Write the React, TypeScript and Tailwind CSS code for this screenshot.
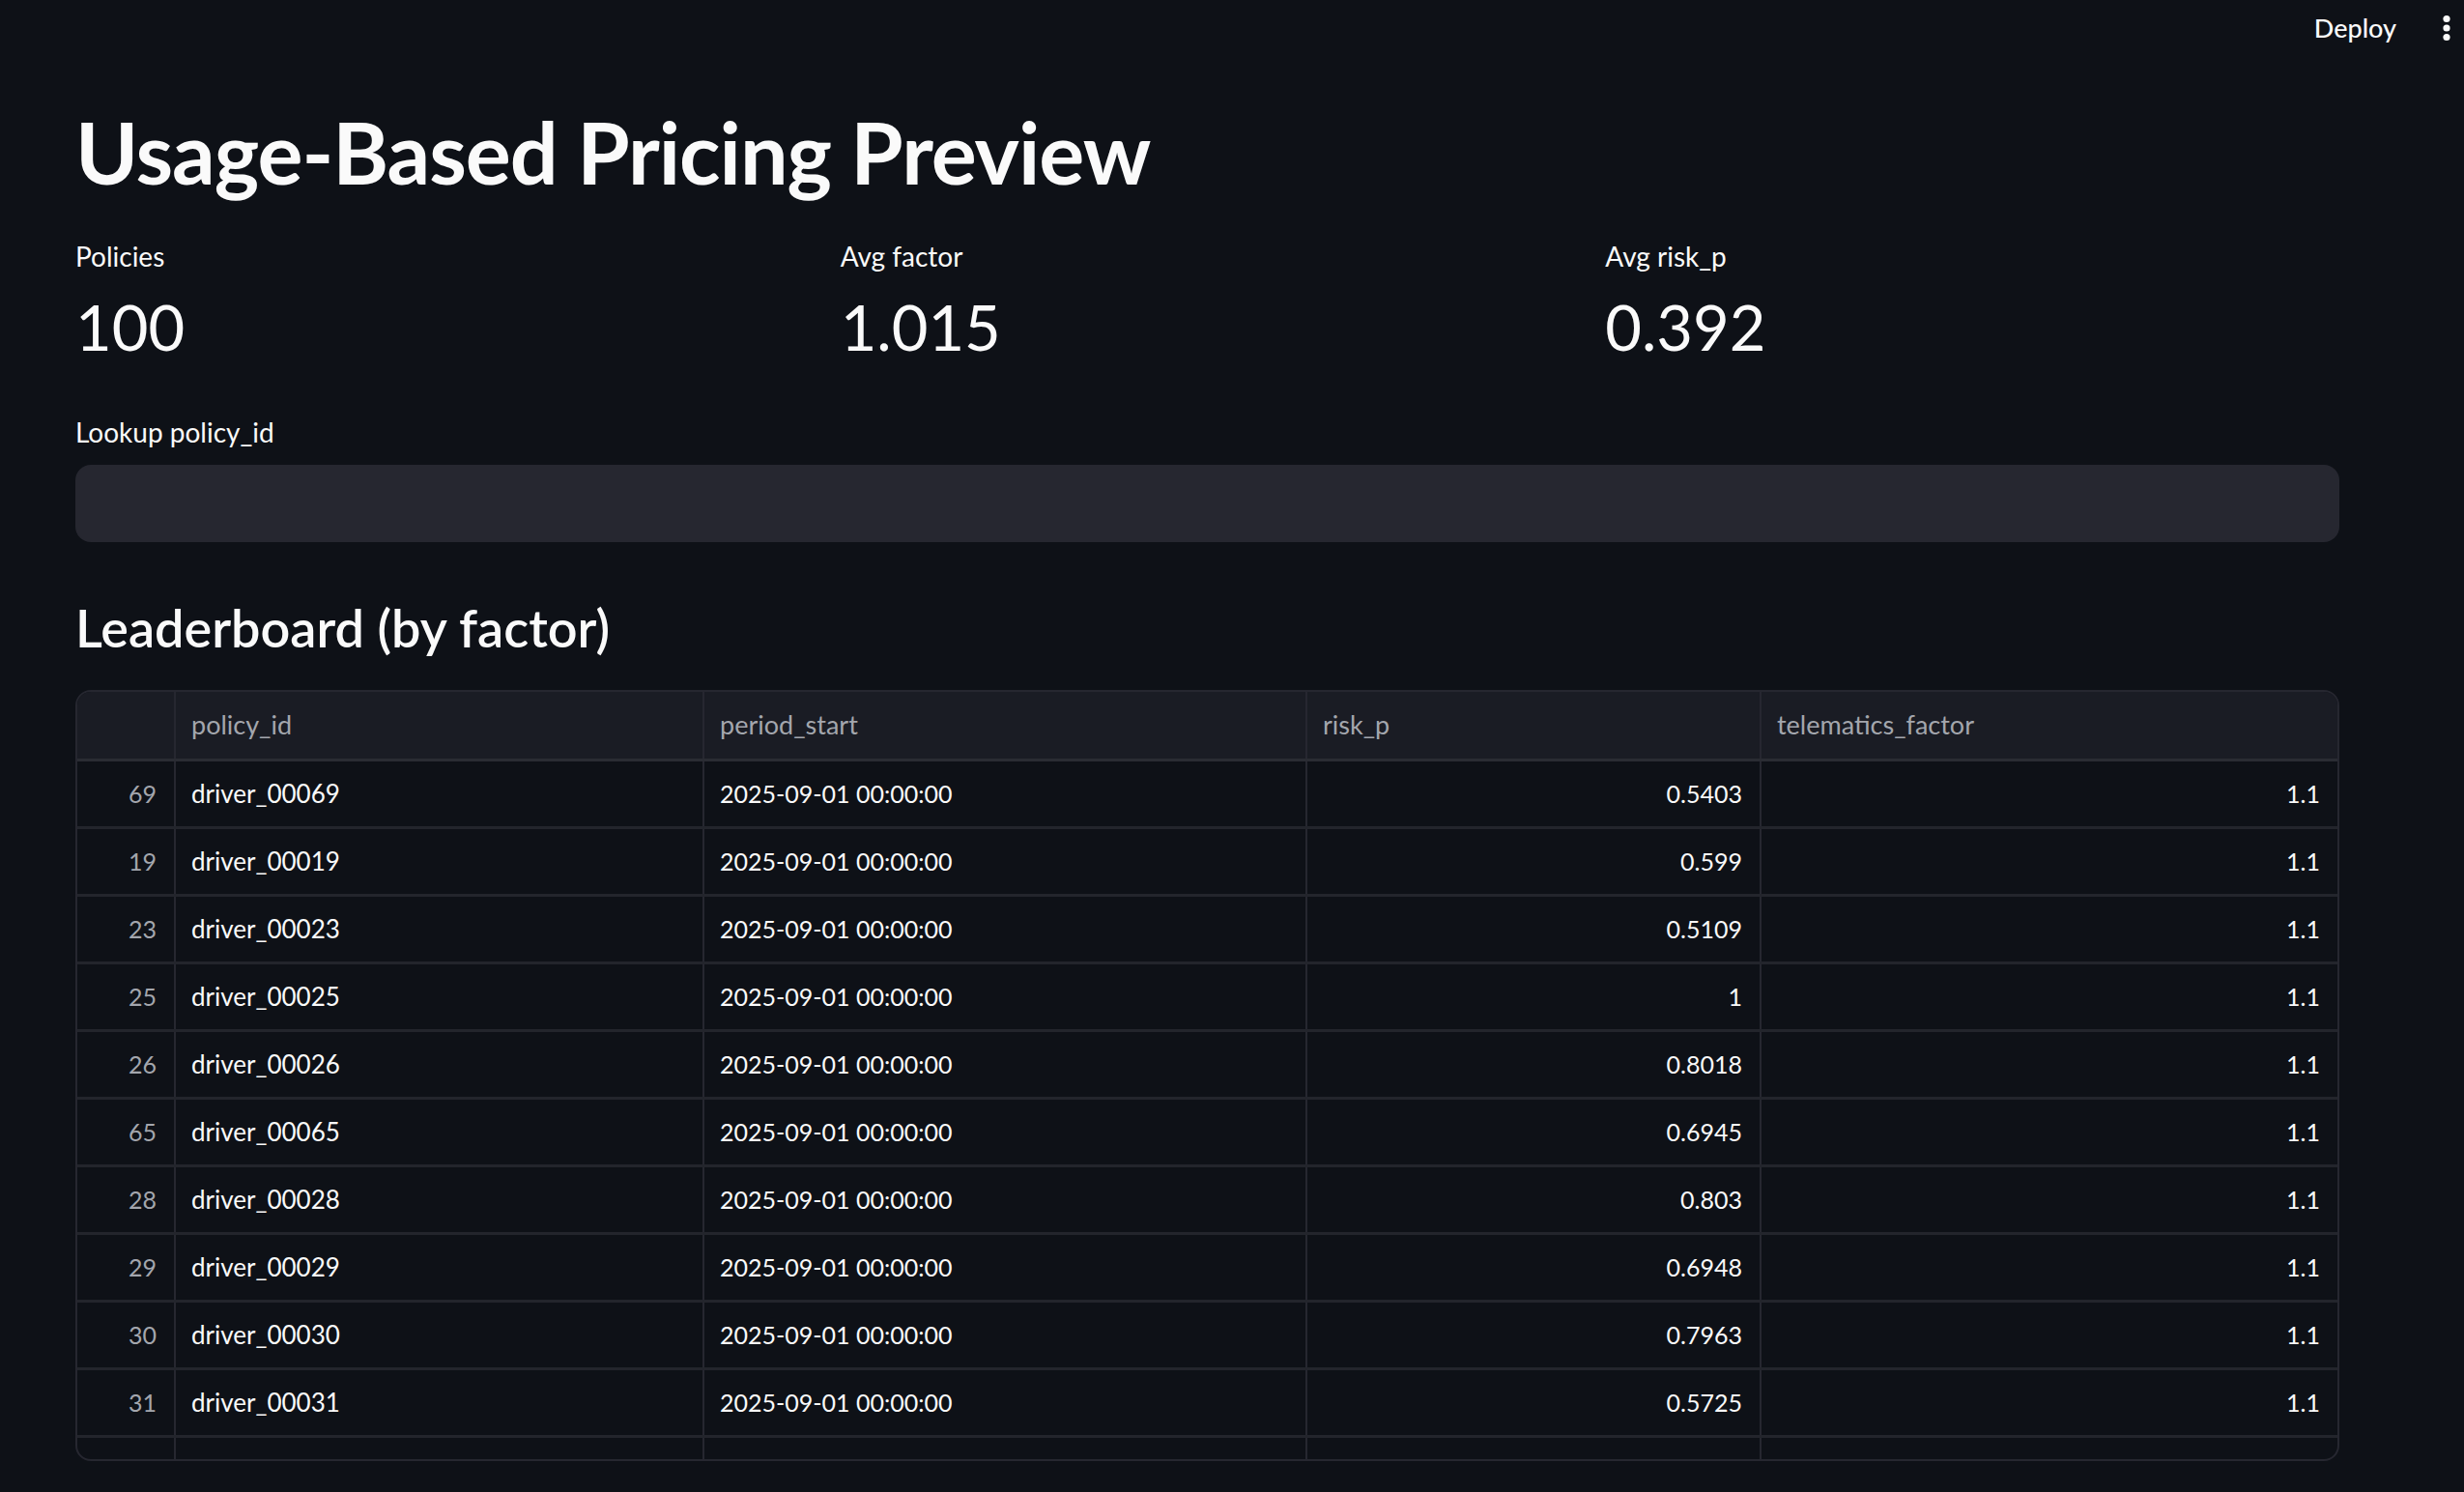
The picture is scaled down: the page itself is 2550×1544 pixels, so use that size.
// App.tsx — Streamlit-like dark "Usage-Based Pricing Preview" page
import React from "react";

// ── Data ────────────────────────────────────────────────────────────────────
interface Row {
  idx: number;
  policy: string;
  start: string;
  risk: string;
  factor: string;
}

const ROWS: Row[] = [
  { idx: 69, policy: "driver_00069", start: "2025-09-01 00:00:00", risk: "0.5403", factor: "1.1" },
  { idx: 19, policy: "driver_00019", start: "2025-09-01 00:00:00", risk: "0.599", factor: "1.1" },
  { idx: 23, policy: "driver_00023", start: "2025-09-01 00:00:00", risk: "0.5109", factor: "1.1" },
  { idx: 25, policy: "driver_00025", start: "2025-09-01 00:00:00", risk: "1", factor: "1.1" },
  { idx: 26, policy: "driver_00026", start: "2025-09-01 00:00:00", risk: "0.8018", factor: "1.1" },
  { idx: 65, policy: "driver_00065", start: "2025-09-01 00:00:00", risk: "0.6945", factor: "1.1" },
  { idx: 28, policy: "driver_00028", start: "2025-09-01 00:00:00", risk: "0.803", factor: "1.1" },
  { idx: 29, policy: "driver_00029", start: "2025-09-01 00:00:00", risk: "0.6948", factor: "1.1" },
  { idx: 30, policy: "driver_00030", start: "2025-09-01 00:00:00", risk: "0.7963", factor: "1.1" },
  { idx: 31, policy: "driver_00031", start: "2025-09-01 00:00:00", risk: "0.5725", factor: "1.1" },
  { idx: 32, policy: "driver_00032", start: "2025-09-01 00:00:00", risk: "0.6612", factor: "1.1" },
];

const COLS = "grid grid-cols-[102px_547px_624px_470px_1fr]";

// ── Metric block ────────────────────────────────────────────────────────────
const Metric: React.FC<{ label: string; value: string }> = ({ label, value }) => (
  <div className="flex flex-col">
    <p className="text-[28px] leading-[36px] text-[#fafafa]">{label}</p>
    <p className="mt-[12px] text-[65px] leading-[86px] text-[#fafafa]">{value}</p>
  </div>
);

// ── Page ────────────────────────────────────────────────────────────────────
const App: React.FC = () => {
  return (
    <div
      className="min-h-screen h-[1544px] overflow-hidden bg-[#0e1117] text-[#fafafa]"
      style={{ fontFamily: "Lato, 'Open Sans', sans-serif" }}
    >
      {/* ── Top bar ── */}
      <header className="flex h-[58px] items-center justify-end pr-[14px]">
        <span className="text-[27px] font-medium text-[#fafafa]">Deploy</span>
        <svg className="ml-[48px] h-[28px] w-[8px]" viewBox="0 0 8 28" fill="#fafafa">
          <circle cx="4" cy="4.5" r="3.6" />
          <circle cx="4" cy="14" r="3.6" />
          <circle cx="4" cy="23.5" r="3.6" />
        </svg>
      </header>

      <main className="ml-[78px] w-[2343px]">
        {/* ── Title ── */}
        <h1 className="mt-[46px] text-[88px] font-bold leading-[106px] tracking-[-1px]">
          Usage-Based Pricing Preview
        </h1>

        {/* ── Metrics ── */}
        <div className="mt-[37px] grid grid-cols-3 gap-[32px]">
          <Metric label="Policies" value="100" />
          <Metric label="Avg factor" value="1.015" />
          <Metric label="Avg risk_p" value="0.392" />
        </div>

        {/* ── Lookup input ── */}
        <p className="mt-[48px] text-[28px] leading-[36px]">Lookup policy_id</p>
        <div className="mt-[16px] h-[80px] rounded-[16px] bg-[#262730]" />

        {/* ── Leaderboard ── */}
        <h3 className="mt-[55px] text-[54px] font-semibold leading-[68px]">
          Leaderboard (by factor)
        </h3>

        <div className="mt-[30px] h-[798px] overflow-hidden rounded-[16px] border-2 border-[#262730]">
          <div className={`${COLS} h-[72px] border-b-[3px] border-[#2a2c33] bg-[#1a1c24] text-[27px] text-[#a3a6ad]`}>
            <div className="border-r-2 border-[#262730]" />
            <div className="flex items-center border-r-2 border-[#262730] px-[16px]">policy_id</div>
            <div className="flex items-center border-r-2 border-[#262730] px-[16px]">period_start</div>
            <div className="flex items-center border-r-2 border-[#262730] px-[16px]">risk_p</div>
            <div className="flex items-center px-[16px]">telematics_factor</div>
          </div>
          {ROWS.map((r) => (
            <div key={r.idx} className={`${COLS} h-[70px] border-b-[3px] border-[#23252c] text-[25px]`}>
              <div className="flex items-center justify-end border-r-2 border-[#262730] px-[18px] text-[#a3a6ad]">
                {r.idx}
              </div>
              <div className="flex items-center border-r-2 border-[#262730] px-[16px] text-[26px]">{r.policy}</div>
              <div className="flex items-center border-r-2 border-[#262730] px-[16px]">{r.start}</div>
              <div className="flex items-center justify-end border-r-2 border-[#262730] px-[18px]">{r.risk}</div>
              <div className="flex items-center justify-end px-[18px]">{r.factor}</div>
            </div>
          ))}
        </div>
      </main>
    </div>
  );
};

export default App;
